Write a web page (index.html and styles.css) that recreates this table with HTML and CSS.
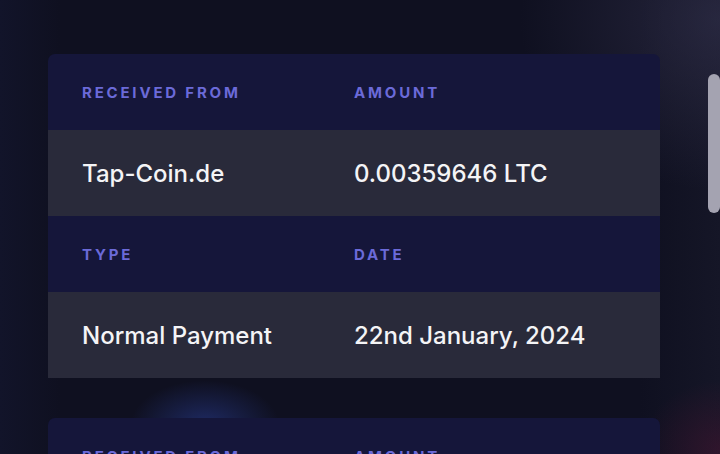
FILE: index.html
```html
<!DOCTYPE html>
<html>
<head>
<meta charset="utf-8">
<link rel="stylesheet" href="styles.css">
</head>
<body>
<div class="page">
  <div class="glow glow-blue"></div>
  <div class="glow glow-red"></div>
  <div class="list">
    <div class="card">
      <div class="row head"><div class="cell">RECEIVED FROM</div><div class="cell">AMOUNT</div></div>
      <div class="row data"><div class="cell">Tap-Coin.de</div><div class="cell">0.00359646 LTC</div></div>
      <div class="row head"><div class="cell">TYPE</div><div class="cell">DATE</div></div>
      <div class="row data"><div class="cell">Normal Payment</div><div class="cell">22nd January, 2024</div></div>
    </div>
    <div class="card">
      <div class="row head"><div class="cell">RECEIVED FROM</div><div class="cell">AMOUNT</div></div>
      <div class="row data"><div class="cell">Tap-Coin.de</div><div class="cell">0.00359646 LTC</div></div>
    </div>
  </div>
  <div class="scrollbar"></div>
</div>
</body>
</html>
```
FILE: styles.css
```css
html, body {
  margin: 0;
  padding: 0;
  width: 720px;
  height: 454px;
  overflow: hidden;
}
body {
  font-family: Inter, "Noto Sans", sans-serif;
  background: #0f0f1f;
}
.page {
  position: relative;
  width: 720px;
  height: 454px;
  overflow: hidden;
  background:
    radial-gradient(ellipse 200px 170px at 720px 20px, rgba(58,56,86,0.5), rgba(58,56,86,0) 100%),
    linear-gradient(90deg, #12142a 0px, #0f1020 60px, #0f1020 640px, #151627 720px);
}
.glow {
  position: absolute;
  border-radius: 50%;
  pointer-events: none;
}
.glow-blue {
  left: 130px;
  top: 380px;
  width: 150px;
  height: 90px;
  background: radial-gradient(ellipse at center, rgba(35,50,120,0.75), rgba(35,50,120,0) 70%);
}
.glow-red {
  left: 640px;
  top: 380px;
  width: 160px;
  height: 140px;
  background: radial-gradient(ellipse at center, rgba(80,20,50,0.45), rgba(80,20,50,0) 70%);
}
.list {
  position: relative;
  padding: 54px 0 0 48px;
  width: 612px;
  display: flex;
  flex-direction: column;
  gap: 40px;
}
.card {
  border-radius: 7px 7px 0 0;
  overflow: hidden;
}
.card + .card {
  border-radius: 7px;
}
.row {
  display: grid;
  grid-template-columns: 272px 272px;
  padding: 0 34px;
  align-items: center;
}
.head {
  height: 76px;
  background: #15163a;
}
.data {
  height: 86px;
  background: #292a3a;
}
.head .cell {
  color: #6b6ad8;
  font-size: 15px;
  font-weight: 700;
  letter-spacing: 2.8px;
}
.data .cell {
  color: #f4f4f6;
  font-size: 24px;
  font-weight: 500;
  letter-spacing: 0;
}
.scrollbar {
  position: absolute;
  left: 708px;
  top: 74px;
  width: 12px;
  height: 139px;
  border-radius: 6px;
  background: #a4a3b1;
}
```
